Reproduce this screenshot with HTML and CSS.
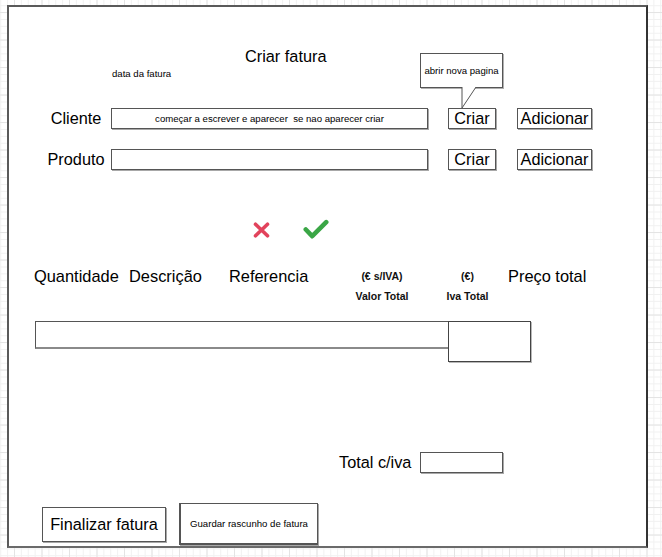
FILE: index.html
```html
<!DOCTYPE html>
<html lang="pt">
<head>
<meta charset="utf-8">
<title>Criar fatura</title>
<link rel="stylesheet" href="styles.css">
</head>
<body>
<div class="frame">
  <div class="top">
    <div class="date">data da fatura</div>
    <div class="title">Criar fatura</div>
    <div class="callout">
      <div class="callout-box">abrir nova pagina</div>
      <svg class="callout-tail" width="83" height="21" viewBox="0 0 83 21">
        <polygon points="42,0 56,0 42,20.5" fill="#fff"/>
        <line x1="42" y1="0" x2="42" y2="21" stroke="#555" stroke-width="1"/>
        <line x1="56" y1="0" x2="42" y2="21" stroke="#555" stroke-width="1"/>
      </svg>
    </div>
  </div>

  <div class="row">
    <div class="label">Cliente</div>
    <div class="field">começar a escrever e aparecer&nbsp; se nao aparecer criar</div>
    <div class="btn">Criar</div>
    <div class="btn btn-wide">Adicionar</div>
  </div>

  <div class="row row-2">
    <div class="label">Produto</div>
    <div class="field"></div>
    <div class="btn">Criar</div>
    <div class="btn btn-wide">Adicionar</div>
  </div>

  <div class="icons">
    <svg class="icon-x" width="17" height="16" viewBox="0 0 17 16">
      <path d="M2.5 2.2 L14.5 13.8 M14.5 2.2 L2.5 13.8" stroke="#e2435c" stroke-width="3.6" stroke-linecap="round" fill="none"/>
    </svg>
    <svg class="icon-check" width="26" height="21" viewBox="0 0 26 21">
      <path d="M2.8 10.5 L9.2 17.2 L23.2 3.2" stroke="#3aa646" stroke-width="4.6" stroke-linecap="round" stroke-linejoin="round" fill="none"/>
    </svg>
  </div>

  <div class="headers">
    <div class="h h-qty">Quantidade</div>
    <div class="h h-desc">Descrição</div>
    <div class="h h-ref">Referencia</div>
    <div class="h-small h-valor">(€ s/IVA)<br>Valor Total</div>
    <div class="h-small h-iva">(€)<br>Iva Total</div>
    <div class="h">Preço total</div>
  </div>

  <div class="table">
    <div class="cell-long"></div>
    <div class="cell-right"></div>
  </div>

  <div class="total">
    <div class="total-label">Total c/iva</div>
    <div class="total-box"></div>
  </div>

  <div class="actions">
    <div class="btn-final">Finalizar fatura</div>
    <div class="btn-draft">Guardar rascunho de fatura</div>
  </div>
</div>
</body>
</html>
```

FILE: styles.css
```css
html, body {
  margin: 0;
  padding: 0;
}

body {
  width: 662px;
  height: 557px;
  overflow: hidden;
  font-family: "Liberation Sans", Arial, sans-serif;
  color: #000;
  background-color: #ffffff;
  background-image:
    linear-gradient(to right, #e4e4e4 1px, transparent 1px),
    linear-gradient(to bottom, #e4e4e4 1px, transparent 1px),
    linear-gradient(to right, #f1f1f1 1px, transparent 1px),
    linear-gradient(to bottom, #f1f1f1 1px, transparent 1px);
  background-size: 27.5px 27.5px, 27.5px 27.5px, 6.875px 6.875px, 6.875px 6.875px;
  background-position: 14px 12px, 14px 12px, 0.25px 5.25px, 0.25px 5.25px;
}

.frame {
  box-sizing: border-box;
  margin: 5px 0 0 7px;
  width: 641px;
  height: 543px;
  background: #fff;
  border: 2px solid #5a5a5a;
  border-right-color: #333;
  border-bottom-color: #6a6a6a;
}

/* top area */
.top {
  display: flex;
  align-items: flex-start;
  height: 101px;
}

.date {
  margin-left: 103px;
  margin-top: 61px;
  width: 133px;
  font-size: 9.6px;
  line-height: 11px;
}

.title {
  margin-top: 40px;
  width: 175px;
  font-size: 16.3px;
  line-height: 19px;
}

.callout {
  margin-top: 46px;
  width: 83px;
  display: flex;
  flex-direction: column;
}

.callout-box {
  box-sizing: border-box;
  height: 35px;
  border: 1px solid #555;
  box-shadow: 1px 1px 0 #b0b0b0;
  font-size: 9.6px;
  line-height: 33px;
  text-align: center;
  white-space: nowrap;
}

.callout-tail {
  display: block;
  margin-top: -1px;
  height: 21px;
}

/* form rows */
.row {
  display: flex;
  align-items: center;
  height: 21px;
}

.row-2 {
  margin-top: 20px;
}

.label {
  margin-left: 32px;
  width: 70px;
  text-align: center;
  font-size: 16.3px;
  line-height: 19px;
  white-space: nowrap;
}

.field {
  box-sizing: border-box;
  width: 317px;
  height: 21px;
  border: 1px solid #555;
  box-shadow: 1px 1px 0 #a8a8a8;
  font-size: 9.6px;
  line-height: 19px;
  text-align: center;
  white-space: nowrap;
}

.btn {
  box-sizing: border-box;
  margin-left: 20px;
  width: 48px;
  height: 21px;
  border: 1px solid #555;
  box-shadow: 1px 1px 0 #a8a8a8;
  font-size: 16.3px;
  line-height: 19px;
  text-align: center;
}

.btn-wide {
  margin-left: 21px;
  width: 75px;
}

/* icons */
.icons {
  display: flex;
  align-items: flex-start;
  margin-top: 49px;
  height: 21px;
}

.icon-x {
  display: block;
  margin-left: 244px;
  margin-top: 3px;
}

.icon-check {
  display: block;
  margin-left: 33px;
}

/* table headers */
.headers {
  display: flex;
  align-items: flex-start;
  margin-top: 27px;
  height: 54px;
}

.h {
  font-size: 16.4px;
  line-height: 19px;
  white-space: nowrap;
}

.h-qty {
  margin-left: 25px;
  width: 95px;
}

.h-desc {
  width: 100px;
}

.h-ref {
  width: 111px;
}

.h-small {
  font-size: 10.5px;
  font-weight: bold;
  line-height: 20px;
  text-align: center;
  margin-top: -1px;
  color: #111;
}

.h-valor {
  width: 84px;
}

.h-iva {
  margin-left: 3px;
  width: 81px;
}

/* table boxes */
.table {
  display: flex;
  align-items: flex-start;
  margin-left: 26px;
}

.cell-long {
  box-sizing: border-box;
  width: 414px;
  height: 28px;
  border: 1px solid #555;
  border-bottom: 2px solid #8a8a8a;
}

.cell-right {
  box-sizing: border-box;
  margin-left: -1px;
  width: 83px;
  height: 41px;
  border: 1px solid #444;
  box-shadow: 1px 1px 0 #b8b8b8;
}

/* total */
.total {
  display: flex;
  align-items: center;
  margin-top: 90px;
  height: 21px;
}

.total-label {
  margin-left: 330px;
  width: 81px;
  font-size: 16.3px;
  line-height: 19px;
  white-space: nowrap;
}

.total-box {
  box-sizing: border-box;
  width: 83px;
  height: 21px;
  border: 1px solid #555;
  box-shadow: 1px 1px 0 #a8a8a8;
}

/* actions */
.actions {
  display: flex;
  align-items: center;
  margin-top: 30px;
  height: 42px;
}

.btn-final {
  box-sizing: border-box;
  margin-left: 33px;
  width: 124px;
  height: 35px;
  border: 1px solid #555;
  box-shadow: 1px 1px 0 #a8a8a8;
  font-size: 16.3px;
  line-height: 33px;
  text-align: center;
  white-space: nowrap;
}

.btn-draft {
  box-sizing: border-box;
  margin-left: 13px;
  width: 139px;
  height: 42px;
  border: 1px solid #555;
  border-left-width: 2px;
  border-bottom-width: 2px;
  box-shadow: 1px 1px 0 #a8a8a8;
  font-size: 9.6px;
  line-height: 39px;
  text-align: center;
  white-space: nowrap;
}
```
